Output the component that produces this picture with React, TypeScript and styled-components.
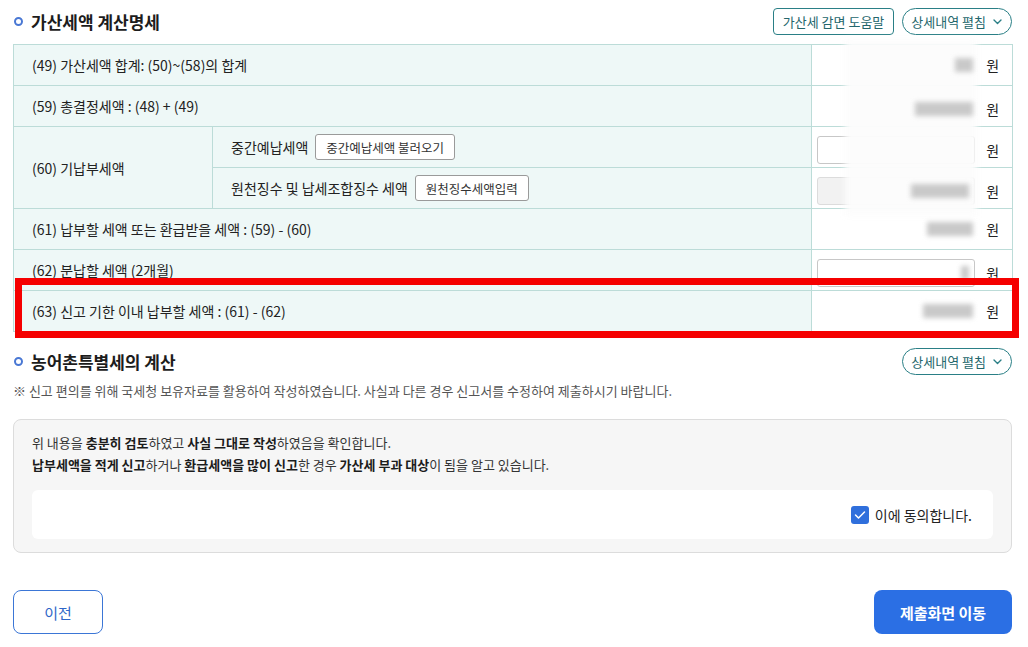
import React from 'react';
import styled, {createGlobalStyle} from 'styled-components';

const GlobalStyle = createGlobalStyle`
    html, body {
        margin: 0;
        padding: 0;
        background: #fff;
    }
    body {
        font-family: "Noto Sans CJK KR", "Noto Sans", sans-serif;
        color: #222;
    }
`;

const Page = styled.div`
    width: 1028px;
    box-sizing: border-box;
    padding: 8px 16px 0 13px;
`;

const SectionHead = styled.div`
    display: flex;
    align-items: center;
    justify-content: space-between;
    height: 27px;
    margin-top: ${({$top}: {$top: number; $gap: number}) => $top}px;
    margin-bottom: ${({$gap}: {$top: number; $gap: number}) => $gap}px;
`;

const Title = styled.h2`
    display: flex;
    align-items: center;
    gap: 8px;
    margin: 0;
    font-size: 17px;
    font-weight: 700;
    color: #1c1c1c;
    &::before {
        content: '';
        width: 5px;
        height: 5px;
        border: 2px solid #4a78d4;
        border-radius: 50%;
        margin-left: 1px;
    }
`;

const HeadButtons = styled.div`
    display: flex;
    gap: 8px;
`;

const OutlineButton = styled.button`
    height: 27px;
    padding: 0 9px;
    border: 1px solid #2a7f86;
    border-radius: 4px;
    background: #fff;
    color: #24666c;
    font-family: inherit;
    font-size: 13px;
`;

const PillButton = styled(OutlineButton)`
    display: flex;
    align-items: center;
    gap: 7px;
    padding: 0 9px 0 8px;
    border-radius: 14px;
`;

const TableWrap = styled.div`
    position: relative;
`;

const Table = styled.table`
    width: 999px;
    border-collapse: collapse;
    table-layout: fixed;
    font-size: 14px;
    color: #222;
`;

const Row = styled.tr`
    height: 40.5px;
`;

const LabelCell = styled.td`
    background: #eef8f7;
    border: 1px solid #bcdcd8;
    padding: 0 0 0 18px;
    vertical-align: middle;
`;

const ValueCell = styled.td`
    position: relative;
    background: #fff;
    border: 1px solid #bcdcd8;
    padding: 0 13px 0 5px;
`;

const ValueInner = styled.div`
    display: flex;
    align-items: center;
    justify-content: flex-end;
    gap: 11px;
    height: 40px;
    padding-top: ${({$low}: {$low?: boolean}) => ($low ? 6 : 0)}px;
    box-sizing: border-box;
`;

const Won = styled.span`
    position: relative;
    z-index: 3;
    font-size: 14px;
`;

const Blur = styled.span`
    position: relative;
    z-index: 3;
    display: block;
    height: 14px;
    background: #c9c9c9;
    filter: blur(2.5px);
    margin-right: 2px;
`;

const AmountInput = styled.div`
    flex: 1;
    display: flex;
    justify-content: flex-end;
    align-items: center;
    height: 26px;
    border: 1px solid ${({$disabled}: {$disabled?: boolean}) => ($disabled ? '#dcdcdc' : '#c7c7c7')};
    border-radius: 3px;
    background: ${({$disabled}: {$disabled?: boolean}) => ($disabled ? '#f2f2f2' : '#fff')};
    padding-right: 3px;
`;

const SubLabel = styled.div`
    display: flex;
    align-items: center;
    gap: 7px;
`;

const SmallButton = styled.button`
    height: 26px;
    padding: 0 10px;
    border: 1px solid #9a9a9a;
    border-radius: 3px;
    background: #fff;
    color: #333;
    font-family: inherit;
    font-size: 12.5px;
`;

const Mask = styled.div`
    position: absolute;
    z-index: 2;
    left: 832px;
    top: -4px;
    width: 132px;
    height: 176px;
    background: rgba(252, 252, 252, 0.97);
    filter: blur(3px);
    pointer-events: none;
`;

const Highlight = styled.div`
    position: absolute;
    z-index: 4;
    left: 2px;
    top: 234px;
    width: 1004px;
    height: 60px;
    box-sizing: border-box;
    border: 7px solid #f50000;
    pointer-events: none;
`;

const Note = styled.p`
    margin: 0 0 17px;
    height: 22px;
    line-height: 22px;
    font-size: 13px;
    color: #555;
`;

const ConfirmBox = styled.div`
    background: #f6f6f6;
    border: 1px solid #dcdcdc;
    border-radius: 8px;
    padding: 12px 18px 13px;
`;

const ConfirmLine = styled.p`
    margin: 0;
    line-height: 22px;
    font-size: 13px;
    color: #333;
    b {
        font-weight: 700;
        color: #1c1c1c;
    }
`;

const AgreeBar = styled.div`
    display: flex;
    justify-content: flex-end;
    align-items: center;
    gap: 6px;
    height: 49px;
    margin-top: 14px;
    padding-right: 21px;
    background: #fff;
    border-radius: 6px;
    font-size: 14px;
    color: #222;
`;

const Check = styled.span`
    display: flex;
    align-items: center;
    justify-content: center;
    width: 18px;
    height: 18px;
    border-radius: 3px;
    background: #2f6fdc;
`;

const Footer = styled.div`
    display: flex;
    justify-content: space-between;
    margin-top: 37px;
`;

const PrevButton = styled.button`
    width: 90px;
    height: 44px;
    border: 1px solid #3b76d6;
    border-radius: 8px;
    background: #fff;
    color: #2e66c8;
    font-family: inherit;
    font-size: 15px;
`;

const NextButton = styled.button`
    width: 138px;
    height: 44px;
    border: none;
    border-radius: 8px;
    background: #2b6fe4;
    color: #fff;
    font-family: inherit;
    font-size: 15px;
    font-weight: 700;
`;

function Chevron() {
    return (
        <svg width="9" height="6" viewBox="0 0 9 6" fill="none">
            <path d="M1 1l3.5 3.5L8 1" stroke="#2a7f86" strokeWidth="1.4" strokeLinecap="round" strokeLinejoin="round" />
        </svg>
    );
}

function Amount(props: {width?: number; input?: boolean; disabled?: boolean; low?: boolean}) {
    const {width, input, disabled, low} = props;
    const blur = width ? <Blur style={{width}} /> : null;
    return (
        <ValueInner $low={low}>
            {input ? <AmountInput $disabled={disabled}>{blur}</AmountInput> : blur}
            <Won>원</Won>
        </ValueInner>
    );
}

export default function App() {
    return (
        <Page>
            <GlobalStyle />
            <SectionHead $top={0} $gap={9}>
                <Title>가산세액 계산명세</Title>
                <HeadButtons>
                    <OutlineButton>가산세 감면 도움말</OutlineButton>
                    <PillButton>상세내역 펼침 <Chevron /></PillButton>
                </HeadButtons>
            </SectionHead>

            <TableWrap>
                <Table>
                    <colgroup>
                        <col style={{width: 199}} />
                        <col style={{width: 599}} />
                        <col style={{width: 201}} />
                    </colgroup>
                    <tbody>
                        <Row>
                            <LabelCell colSpan={2}>(49) 가산세액 합계: (50)~(58)의 합계</LabelCell>
                            <ValueCell><Amount width={18} /></ValueCell>
                        </Row>
                        <Row>
                            <LabelCell colSpan={2}>(59) 총결정세액 : (48) + (49)</LabelCell>
                            <ValueCell><Amount width={58} low /></ValueCell>
                        </Row>
                        <Row>
                            <LabelCell rowSpan={2}>(60) 기납부세액</LabelCell>
                            <LabelCell>
                                <SubLabel>중간예납세액 <SmallButton>중간예납세액 불러오기</SmallButton></SubLabel>
                            </LabelCell>
                            <ValueCell><Amount input low /></ValueCell>
                        </Row>
                        <Row>
                            <LabelCell>
                                <SubLabel>원천징수 및 납세조합징수 세액 <SmallButton>원천징수세액입력</SmallButton></SubLabel>
                            </LabelCell>
                            <ValueCell><Amount input disabled width={58} low /></ValueCell>
                        </Row>
                        <Row>
                            <LabelCell colSpan={2}>(61) 납부할 세액 또는 환급받을 세액 : (59) - (60)</LabelCell>
                            <ValueCell><Amount width={46} /></ValueCell>
                        </Row>
                        <Row>
                            <LabelCell colSpan={2}>(62) 분납할 세액 (2개월)</LabelCell>
                            <ValueCell><Amount input width={8} low /></ValueCell>
                        </Row>
                        <Row>
                            <LabelCell colSpan={2}>(63) 신고 기한 이내 납부할 세액 : (61) - (62)</LabelCell>
                            <ValueCell><Amount width={50} /></ValueCell>
                        </Row>
                    </tbody>
                </Table>
                <Mask />
                <Highlight />
            </TableWrap>

            <SectionHead $top={16} $gap={5}>
                <Title>농어촌특별세의 계산</Title>
                <PillButton>상세내역 펼침 <Chevron /></PillButton>
            </SectionHead>

            <Note>※ 신고 편의를 위해 국세청 보유자료를 활용하여 작성하였습니다. 사실과 다른 경우 신고서를 수정하여 제출하시기 바랍니다.</Note>

            <ConfirmBox>
                <ConfirmLine>
                    위 내용을 <b>충분히 검토</b>하였고 <b>사실 그대로 작성</b>하였음을 확인합니다.
                </ConfirmLine>
                <ConfirmLine>
                    <b>납부세액을 적게 신고</b>하거나 <b>환급세액을 많이 신고</b>한 경우 <b>가산세 부과 대상</b>이 됨을 알고 있습니다.
                </ConfirmLine>
                <AgreeBar>
                    <Check>
                        <svg width="12" height="10" viewBox="0 0 12 10" fill="none">
                            <path d="M1.5 5l3 3L10.5 2" stroke="#fff" strokeWidth="1.5" strokeLinecap="round" strokeLinejoin="round" />
                        </svg>
                    </Check>
                    이에 동의합니다.
                </AgreeBar>
            </ConfirmBox>

            <Footer>
                <PrevButton>이전</PrevButton>
                <NextButton>제출화면 이동</NextButton>
            </Footer>
        </Page>
    );
}
